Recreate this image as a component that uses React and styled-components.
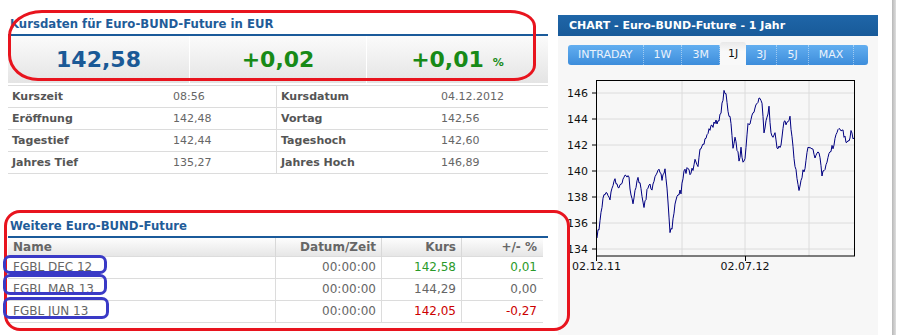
import React from "react";
import styled, { createGlobalStyle } from "styled-components";

const GlobalStyle = createGlobalStyle`
  html, body {
    margin: 0;
    padding: 0;
    background: #fff;
  }
  body {
    font-family: "DejaVu Sans", Verdana, sans-serif;
  }
`;

const quotes = [
  { value: "142,58", tone: "blue" },
  { value: "+0,02", tone: "green" },
  { value: "+0,01", tone: "green", unit: "%" },
];

const stats = [
  ["Kurszeit", "08:56", "Kursdatum", "04.12.2012"],
  ["Eröffnung", "142,48", "Vortag", "142,56"],
  ["Tagestief", "142,44", "Tageshoch", "142,60"],
  ["Jahres Tief", "135,27", "Jahres Hoch", "146,89"],
];

const futures = [
  { name: "FGBL DEC 12", time: "00:00:00", kurs: "142,58", diff: "0,01", tone: "up" },
  { name: "FGBL MAR 13", time: "00:00:00", kurs: "144,29", diff: "0,00", tone: "flat" },
  { name: "FGBL JUN 13", time: "00:00:00", kurs: "142,05", diff: "-0,27", tone: "down" },
];

const tabs = ["INTRADAY", "1W", "3M", "1J", "3J", "5J", "MAX"];

const toneColors = {
  blue: "#1a5996",
  green: "#178a17",
  up: "#2a9a2a",
  flat: "#666",
  down: "#cc0000",
};

// rough shape of the year curve, page coordinates
const anchors = [
  [597, 238], [600, 222], [603, 198], [606, 191], [610, 198], [614, 180], [617, 184],
  [620, 187], [623, 178], [626, 173], [629, 178], [631, 196], [633, 205], [636, 185],
  [638, 176], [641, 190], [644, 208], [647, 192], [650, 183], [652, 190], [655, 178],
  [659, 169], [662, 178], [665, 168], [667, 188], [670, 230], [672, 228], [675, 205],
  [678, 193], [681, 192], [684, 173], [688, 168], [690, 175], [693, 168], [695, 157],
  [698, 165], [700, 152], [703, 147], [706, 137], [710, 128], [713, 125], [716, 123],
  [720, 117], [722, 105], [724, 90], [726, 95], [728, 113], [731, 122], [733, 147],
  [735, 140], [737, 148], [739, 160], [741, 150], [743, 160], [745, 156], [748, 125],
  [751, 120], [754, 110], [757, 103], [760, 97], [762, 105], [764, 130], [767, 115],
  [769, 108], [771, 135], [773, 137], [775, 130], [777, 150], [779, 148], [781, 145],
  [784, 120], [787, 125], [790, 118], [793, 148], [795, 167], [797, 177], [799, 188],
  [802, 175], [805, 168], [807, 150], [810, 150], [813, 152], [816, 157], [819, 152],
  [822, 173], [825, 168], [828, 160], [830, 150], [834, 145], [837, 132], [841, 130],
  [843, 130], [846, 143], [849, 144], [851, 133], [854, 138],
];

function buildLine() {
  let seed = 7;
  const rand = () => {
    seed = (seed * 16807) % 2147483647;
    return seed / 2147483647;
  };
  const pts = [];
  for (let i = 0; i < anchors.length - 1; i++) {
    const [x0, y0] = anchors[i];
    const [x1, y1] = anchors[i + 1];
    for (let x = x0; x < x1; x++) {
      const t = (x - x0) / (x1 - x0);
      const jitter = i === 0 && x === x0 ? 0 : (rand() - 0.5) * 6;
      pts.push(`${x},${(y0 + (y1 - y0) * t + jitter).toFixed(1)}`);
    }
  }
  const last = anchors[anchors.length - 1];
  pts.push(`${last[0]},${last[1]}`);
  return pts.join(" ");
}

const linePoints = buildLine();
const yLabels = [146, 144, 142, 140, 138, 136, 134];

export default function App() {
  return (
    <>
      <GlobalStyle />
      <Page>
        <LeftColumn>
          <SectionTitle>Kursdaten für Euro-BUND-Future in EUR</SectionTitle>
          <QuoteBand>
            {quotes.map((q) => (
              <QuoteCell key={q.value} tone={q.tone}>
                {q.value}
                {q.unit && <QuoteUnit>{q.unit}</QuoteUnit>}
              </QuoteCell>
            ))}
          </QuoteBand>
          <StatsTable>
            {stats.map((row) => (
              <StatsRow key={row[0]}>
                <StatLabel>{row[0]}</StatLabel>
                <StatValue>{row[1]}</StatValue>
                <StatLabel divided>{row[2]}</StatLabel>
                <StatValue>{row[3]}</StatValue>
              </StatsRow>
            ))}
          </StatsTable>

          <SectionTitle spaced>Weitere Euro-BUND-Future</SectionTitle>
          <FutureTable>
            <FutureHeader>
              <HeadCell>Name</HeadCell>
              <HeadCell right>Datum/Zeit</HeadCell>
              <HeadCell right>Kurs</HeadCell>
              <HeadCell right last>+/- %</HeadCell>
            </FutureHeader>
            {futures.map((f) => (
              <FutureRow key={f.name}>
                <BodyCell>{f.name}</BodyCell>
                <BodyCell right>{f.time}</BodyCell>
                <BodyCell right tone={f.tone}>{f.kurs}</BodyCell>
                <BodyCell right last tone={f.tone}>{f.diff}</BodyCell>
              </FutureRow>
            ))}
          </FutureTable>
        </LeftColumn>

        <ChartPanel>
          <ChartHeader>CHART - Euro-BUND-Future - 1 Jahr</ChartHeader>
          <ChartBody>
            <TabBar>
              {tabs.map((t) => (
                <Tab key={t} active={t === "1J"}>
                  {t}
                </Tab>
              ))}
            </TabBar>
            <ChartSvg width="300" height="205" viewBox="568 70 300 205">
              {yLabels.map((v, i) => {
                const y = 93 + i * 26;
                return (
                  <g key={v}>
                    <line x1="596" x2="855" y1={y} y2={y} stroke="#dcdcdc" />
                    <line x1="592" x2="596" y1={y} y2={y} stroke="#000" />
                    <text x="588" y={y + 4} textAnchor="end" fontSize="11" fill="#111">
                      {v}
                    </text>
                  </g>
                );
              })}
              {[682, 745, 809].map((x) => (
                <line key={x} x1={x} x2={x} y1="80" y2="256" stroke="#dcdcdc" />
              ))}
              <polyline points={linePoints} fill="none" stroke="#000080" strokeWidth="1" />
              <rect x="596.5" y="80.5" width="258" height="175.5" fill="none" stroke="#000" />
              <line x1="596.5" x2="596.5" y1="256" y2="261" stroke="#000" />
              <line x1="745.5" x2="745.5" y1="256" y2="261" stroke="#000" />
              <text x="572" y="270" fontSize="11" fill="#111">02.12.11</text>
              <text x="745" y="270" fontSize="11" fill="#111" textAnchor="middle">
                02.07.12
              </text>
            </ChartSvg>
          </ChartBody>
        </ChartPanel>
        <ScrollEdge />

        <Mark color="#e8141e" radius="34px 26px 22px 30px / 26px 16px 16px 26px"
          style={{ left: 8, top: 10, width: 528, height: 71 }} />
        <Mark color="#e8141e" radius="16px" style={{ left: 4, top: 210, width: 566, height: 121 }} />
        <Mark color="#3a3ac6" radius="7px" style={{ left: 3, top: 255, width: 104, height: 19 }} />
        <Mark color="#3a3ac6" radius="7px" style={{ left: 3, top: 274, width: 104, height: 21 }} />
        <Mark color="#3a3ac6" radius="7px" style={{ left: 3, top: 297, width: 106, height: 22 }} />
      </Page>
    </>
  );
}

const Page = styled.div`
  position: relative;
  width: 899px;
  height: 335px;
  overflow: hidden;
  display: flex;
  align-items: flex-start;
`;

const LeftColumn = styled.div`
  width: 540px;
  margin-left: 8px;
  padding-top: 15px;
`;

const SectionTitle = styled.div`
  height: 19px;
  line-height: 19px;
  margin-top: ${(p) => (p.spaced ? "43px" : "0")};
  padding-left: 2px;
  border-bottom: 2px solid #1a5a9a;
  color: #1f5c99;
  font-size: 11.7px;
  font-weight: bold;
`;

const QuoteBand = styled.div`
  display: grid;
  grid-template-columns: 181px 177px 1fr;
  height: 47px;
  background: linear-gradient(#fbfbfb, #e4e4e4);
`;

const QuoteCell = styled.div`
  display: flex;
  align-items: center;
  justify-content: center;
  border-left: 1px solid #fff;
  &:first-child {
    border-left: none;
  }
  color: ${(p) => toneColors[p.tone]};
  font-size: 22px;
  font-weight: bold;
`;

const QuoteUnit = styled.span`
  margin-left: 9px;
  margin-top: 5px;
  font-size: 11px;
`;

const StatsTable = styled.div`
  margin-top: 2px;
  border-top: 1px solid #dcdcdc;
`;

const StatsRow = styled.div`
  display: grid;
  grid-template-columns: 161px 107px 161px 1fr;
  height: 21px;
  border-bottom: 1px solid #dcdcdc;
  font-size: 11px;
  line-height: 21px;
`;

const StatLabel = styled.div`
  padding-left: 4px;
  border-left: ${(p) => (p.divided ? "1px solid #dcdcdc" : "none")};
  color: #555;
  font-weight: bold;
`;

const StatValue = styled.div`
  padding-left: 4px;
  color: #666;
`;

const FutureTable = styled.div`
  width: 535px;
  font-size: 12px;
`;

const FutureHeader = styled.div`
  display: grid;
  grid-template-columns: 268px 106px 80px 1fr;
  height: 18px;
  line-height: 19px;
  border-bottom: 1px solid #dcdcdc;
  background: linear-gradient(#fdfdfd, #e6e6e6);
`;

const HeadCell = styled.div`
  padding: 0 ${(p) => (p.last ? "6px" : "5px")};
  text-align: ${(p) => (p.right ? "right" : "left")};
  border-right: ${(p) => (p.last ? "none" : "1px solid #d8d8d8")};
  color: #666;
  font-weight: bold;
`;

const FutureRow = styled.div`
  display: grid;
  grid-template-columns: 268px 106px 80px 1fr;
  height: 21px;
  line-height: 21px;
  border-bottom: 1px solid #dcdcdc;
`;

const BodyCell = styled.div`
  padding: 0 ${(p) => (p.last ? "6px" : "5px")};
  text-align: ${(p) => (p.right ? "right" : "left")};
  border-right: ${(p) => (p.last ? "none" : "1px solid #dcdcdc")};
  color: ${(p) => (p.tone ? toneColors[p.tone] : "#666")};
`;

const ChartPanel = styled.div`
  width: 320px;
  margin-left: 10px;
  margin-top: 15px;
`;

const ChartHeader = styled.div`
  height: 21px;
  line-height: 21px;
  padding-left: 11px;
  background: linear-gradient(#1f66a8, #185a99);
  color: #fff;
  font-size: 11px;
  font-weight: bold;
`;

const ChartBody = styled.div`
  height: 299px;
  padding: 9px 10px 0;
  background: #f7f7f7;
`;

const TabBar = styled.div`
  display: flex;
  align-items: flex-end;
  width: 300px;
  height: 20px;
  border-radius: 3px;
  background: linear-gradient(#62aef0, #3d8ddb);
`;

const Tab = styled.div`
  height: ${(p) => (p.active ? "23px" : "20px")};
  line-height: ${(p) => (p.active ? "24px" : "20px")};
  padding: 0 ${(p) => (p.active ? "8px" : "10px")};
  border-right: ${(p) => (p.active ? "none" : "1px dotted rgba(255, 255, 255, 0.45)")};
  border-radius: ${(p) => (p.active ? "3px 3px 0 0" : "0")};
  background: ${(p) => (p.active ? "linear-gradient(#e8e8e8, #f9f9f9 40%)" : "transparent")};
  color: ${(p) => (p.active ? "#111" : "#eaf2fc")};
  font-size: 11px;
`;

const ChartSvg = styled.svg`
  display: block;
  margin-top: 5px;
  font-family: "DejaVu Sans", Verdana, sans-serif;
`;

const ScrollEdge = styled.div`
  width: 4px;
  height: 335px;
  margin-left: 14px;
  background: linear-gradient(to right, #b8b8b8, #dedede);
`;

const Mark = styled.div`
  position: absolute;
  box-sizing: border-box;
  border: 3px solid ${(p) => p.color};
  border-radius: ${(p) => p.radius};
  pointer-events: none;
`;
